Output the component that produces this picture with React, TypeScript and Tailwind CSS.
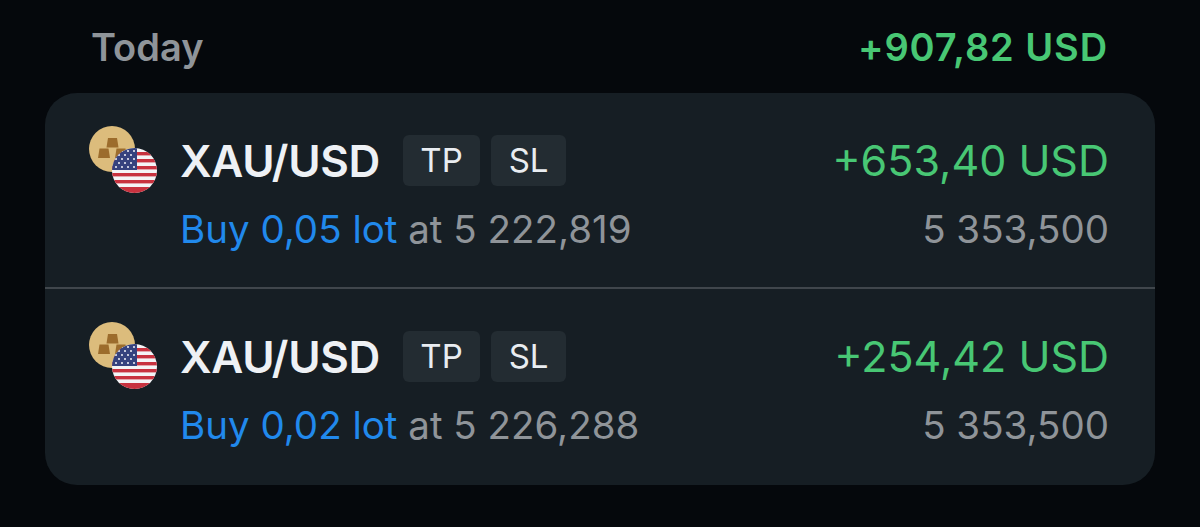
const INTER = "font-['Inter',sans-serif]";

function PairIcon() {
  return (
    <svg width="70" height="72" viewBox="0 0 70 72" className="shrink-0">
      <defs>
        <clipPath id="flag">
          <circle cx="45.5" cy="44.5" r="22.5" />
        </clipPath>
      </defs>
      <circle cx="23" cy="23" r="23" fill="#dcbc7c" />
      <path d="M19 12h9l1.5 9.5h-12z" fill="#9c6c2c" />
      <path d="M10.5 22.5h9l1.5 9.5h-12z" fill="#9c6c2c" />
      <path d="M27.5 22.5h9l1.5 9.5h-12z" fill="#9c6c2c" />
      <g clipPath="url(#flag)">
        <rect x="22" y="21" width="48" height="48" fill="#f4f4f6" />
        <rect x="22" y="26" width="48" height="3.4" fill="#c8323f" />
        <rect x="22" y="33" width="48" height="3.4" fill="#c8323f" />
        <rect x="22" y="40" width="48" height="3.4" fill="#c8323f" />
        <rect x="22" y="47" width="48" height="3.4" fill="#c8323f" />
        <rect x="22" y="54" width="48" height="3.4" fill="#c8323f" />
        <rect x="22" y="61" width="48" height="8" fill="#c8323f" />
        <rect x="22" y="21" width="26" height="23" fill="#36427e" />
        <g fill="#e8e8f0">
          <circle cx="33" cy="25" r="1.1" />
          <circle cx="39" cy="25" r="1.1" />
          <circle cx="45" cy="25" r="1.1" />
          <circle cx="30" cy="29" r="1.1" />
          <circle cx="36" cy="29" r="1.1" />
          <circle cx="42" cy="29" r="1.1" />
          <circle cx="27" cy="33" r="1.1" />
          <circle cx="33" cy="33" r="1.1" />
          <circle cx="39" cy="33" r="1.1" />
          <circle cx="45" cy="33" r="1.1" />
          <circle cx="30" cy="37" r="1.1" />
          <circle cx="36" cy="37" r="1.1" />
          <circle cx="42" cy="37" r="1.1" />
          <circle cx="27" cy="41" r="1.1" />
          <circle cx="33" cy="41" r="1.1" />
          <circle cx="39" cy="41" r="1.1" />
          <circle cx="45" cy="41" r="1.1" />
        </g>
      </g>
    </svg>
  );
}

function Tag({ label, width }: { label: string; width: string }) {
  return (
    <span
      className={`flex h-[51px] items-center justify-center rounded-md bg-[#232c32] text-[33px] text-[#e9edf1] ${width}`}
    >
      {label}
    </span>
  );
}

function Row({
  lot,
  open,
  profit,
  close,
}: {
  lot: string;
  open: string;
  profit: string;
  close: string;
}) {
  return (
    <div className="flex h-[194px] pl-[44px] pr-[46px] pt-[33px]">
      <PairIcon />
      <div className="ml-[21px] flex-1 pt-[9px]">
        <div className="flex h-[51px] items-center justify-between">
          <div className="flex items-center">
            <span className="text-[44px] font-semibold tracking-[-0.3px] text-[#eef1f5]">
              XAU/USD
            </span>
            <div className="ml-[23px] flex gap-[11px]">
              <Tag label="TP" width="w-[77px]" />
              <Tag label="SL" width="w-[75px]" />
            </div>
          </div>
          <span className="text-[43px] text-[#48c774]">{profit}</span>
        </div>
        <div className="mt-[21px] flex items-center justify-between text-[38.5px] leading-[44px]">
          <span>
            <span className="text-[#2189ec]">Buy {lot} lot</span>{" "}
            <span className="text-[#8f9499]">at {open}</span>
          </span>
          <span className="text-[#8f9499]">{close}</span>
        </div>
      </div>
    </div>
  );
}

export default function App() {
  return (
    <div className={`h-[527px] w-[1200px] overflow-hidden bg-[#05080c] ${INTER}`}>
      <div className="flex h-[93px] items-start justify-between pl-[91px] pr-[92px] pt-[24px]">
        <span className="text-[38px] font-semibold leading-[46px] text-[#8f9499]">Today</span>
        <span className="text-[38px] font-semibold leading-[46px] tracking-[0.9px] text-[#48c774]">
          +907,82 USD
        </span>
      </div>
      <div className="mx-[45px] h-[392px] rounded-[32px] bg-[#161e24]">
        <Row lot="0,05" open="5 222,819" profit="+653,40 USD" close="5 353,500" />
        <div className="h-[2px] bg-[#40464c]" />
        <Row lot="0,02" open="5 226,288" profit="+254,42 USD" close="5 353,500" />
      </div>
    </div>
  );
}
